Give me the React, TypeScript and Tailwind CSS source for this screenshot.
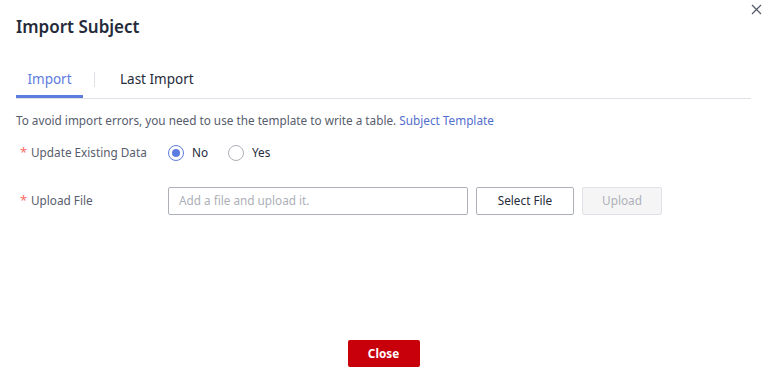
import React from "react";

export default function App() {
  return (
    <div className="relative w-[771px] h-[371px] bg-white text-[11.75px] text-[#575d6c]" style={{ fontFamily: '"Noto Sans", Arial, sans-serif' }}>
      <button className="absolute right-[9px] top-[4px] w-[11px] h-[11px] text-[#575d6c]">
        <svg width="11" height="11" viewBox="0 0 11 11" fill="none" stroke="currentColor" strokeWidth="1.3">
          <path d="M1 1L10 10M10 1L1 10" />
        </svg>
      </button>
      <div className="flex flex-col h-full pl-[16px] pr-[20px]">
        <div className="pt-[16px] h-[58px] text-[17px] font-semibold text-[#252b3a] leading-[22px]">Import Subject</div>
        <div className="flex items-end h-[41px] border-b border-[#dfe1e6]">
          <div className="relative w-[67px] h-[40px] flex items-center justify-center text-[13.5px] text-[#5e7ce0] pt-[3px]">
            Import
            <div className="absolute left-0 right-0 bottom-[0px] h-[3px] bg-[#5e7ce0]" />
          </div>
          <div className="self-center ml-[11px] mt-[2px] w-px h-[15px] bg-[#dfe1e6]" />
          <div className="h-[40px] flex items-center ml-[25px] text-[13.5px] text-[#252b3a] pt-[3px]">Last Import</div>
        </div>
        <div className="mt-[13px] h-[16px] leading-[16px]">
          To avoid import errors, you need to use the template to write a table.{" "}
          <span className="text-[#526ecc]">Subject Template</span>
        </div>
        <div className="flex items-center mt-[11px] h-[28px]">
          <div className="w-[152px] flex items-center">
            <span className="text-[#f66f6a] w-[9px] ml-[4px] text-[13px]">*</span>
            <span className="ml-[2px]">Update Existing Data</span>
          </div>
          <div className="flex items-center">
            <span className="w-[16px] h-[16px] rounded-full border border-[#5e7ce0] flex items-center justify-center">
              <span className="w-[8px] h-[8px] rounded-full bg-[#5e7ce0]" />
            </span>
            <span className="ml-[8px] text-[#252b3a]">No</span>
            <span className="ml-[20px] w-[16px] h-[16px] rounded-full border border-[#adb0b8]" />
            <span className="ml-[8px] text-[#252b3a]">Yes</span>
          </div>
        </div>
        <div className="flex items-center mt-[20px] h-[28px]">
          <div className="w-[152px] flex items-center">
            <span className="text-[#f66f6a] w-[9px] ml-[4px] text-[13px]">*</span>
            <span className="ml-[2px]">Upload File</span>
          </div>
          <div className="w-[300px] h-[28px] border border-[#adb0b8] rounded-[2px] flex items-center px-[10px] text-[#adb0b8]">
            Add a file and upload it.
          </div>
          <button className="ml-[8px] w-[98px] h-[28px] border border-[#adb0b8] rounded-[2px] text-[#252b3a] bg-white">
            Select File
          </button>
          <button className="ml-[8px] w-[80px] h-[28px] border border-[#dfe1e6] rounded-[2px] text-[#adb0b8] bg-[#f5f5f6]">
            Upload
          </button>
        </div>
        <div className="flex-1" />
        <div className="flex justify-center pb-[4px]">
          <button className="w-[72px] h-[27px] rounded-[2px] bg-[#c7000b] text-white font-bold">Close</button>
        </div>
      </div>
    </div>
  );
}
